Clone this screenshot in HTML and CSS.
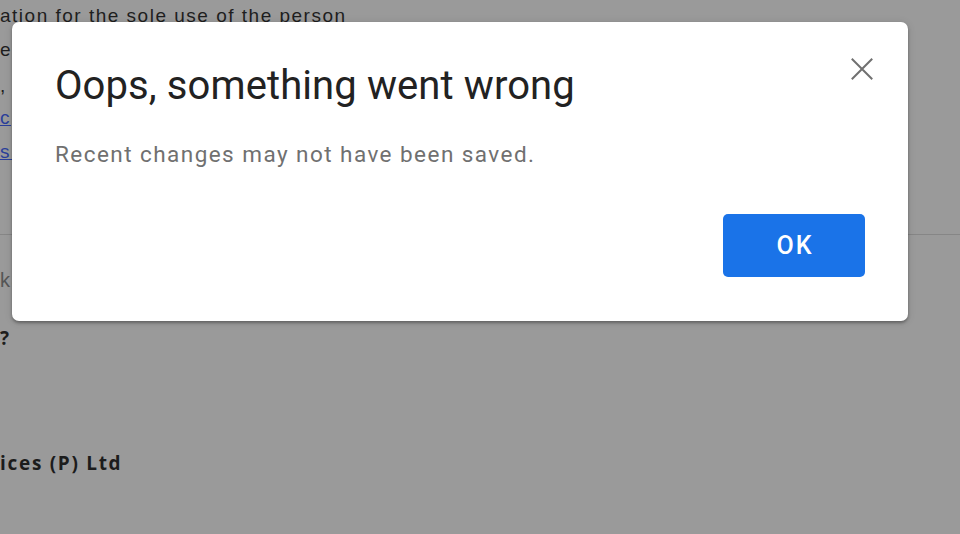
FILE: index.html
```html
<!DOCTYPE html>
<html lang="en">
<head>
<meta charset="utf-8">
<title>Oops, something went wrong</title>
<link rel="stylesheet" href="styles.css">
</head>
<body>
<div class="page">
  <p class="line line-top">ation for the sole use of the person</p>
  <p class="line line-es">es</p>
  <p class="line line-comma">,</p>
  <p class="line line-link"><a href="#">c</a></p>
  <p class="line line-link2"><a href="#">s.</a></p>
  <hr class="rule">
  <p class="line line-ka">ka</p>
  <p class="line line-q">?</p>
  <p class="line line-ltd">ices (P) Ltd</p>
</div>

<div class="dialog" role="dialog">
  <button class="close" aria-label="Close">
    <svg width="22" height="22" viewBox="0 0 22 22"><path d="M1.5 1.5 L20.5 20.5 M20.5 1.5 L1.5 20.5" stroke="#707070" stroke-width="2" fill="none" stroke-linecap="square"/></svg>
  </button>
  <h1 class="title">Oops, something went wrong</h1>
  <p class="msg">Recent changes may not have been saved.</p>
  <div class="actions">
    <button class="ok">OK</button>
  </div>
</div>
</body>
</html>
```
FILE: styles.css
```css
html, body {
  margin: 0;
  padding: 0;
}
body {
  width: 960px;
  height: 534px;
  overflow: hidden;
  background: #9a9a9a;
  position: relative;
  font-family: "Liberation Sans", Arial, sans-serif;
}
.page {
  display: flex;
  flex-direction: column;
  color: #1e1e1e;
  font-size: 19px;
  letter-spacing: 1.5px;
}
.line {
  margin: 0;
  white-space: nowrap;
  line-height: 24px;
}
.line-top { margin-top: 4px; }
.line-es { margin-top: 10px; }
.line-comma { margin-top: 12px; }
.line-link { margin-top: 8px; }
.line-link2 { margin-top: 10px; }
.line a { color: #2a3f9a; text-decoration: underline; }
.rule {
  margin: 70px 0 0;
  border: 0;
  border-top: 1px solid #868686;
  height: 0;
}
.line-ka { margin-top: 33px; color: #555; font-size: 20px; }
.line-q { margin-top: 34px; font-family: "Open Sans", sans-serif; font-weight: 700; }
.line-ltd {
  margin-top: 101px;
  font-family: "Open Sans", sans-serif;
  font-weight: 700;
  font-size: 19px;
  letter-spacing: 1.7px;
  color: #1c1c1c;
}

.dialog {
  position: absolute;
  left: 12px;
  top: 22px;
  width: 896px;
  height: 299px;
  box-sizing: border-box;
  background: #fff;
  border-radius: 7px;
  box-shadow: 0 2px 3px rgba(0,0,0,0.3), 0 1px 8px rgba(0,0,0,0.12);
  padding: 40px 43px 44px 43px;
  display: flex;
  flex-direction: column;
}
.close {
  position: absolute;
  top: 36px;
  right: 35px;
  width: 22px;
  height: 22px;
  padding: 0;
  border: 0;
  background: none;
  display: block;
}
.close svg { display: block; }
.title {
  margin: 0;
  font-family: Roboto, sans-serif;
  font-weight: 400;
  font-size: 40px;
  line-height: 48px;
  color: #222;
  letter-spacing: 0.1px;
}
.msg {
  margin: 30px 0 0;
  font-family: Roboto, sans-serif;
  font-size: 22.5px;
  line-height: 28px;
  color: #707070;
  letter-spacing: 1.45px;
}
.actions {
  margin-top: auto;
  display: flex;
  justify-content: flex-end;
}
.ok {
  width: 142px;
  height: 63px;
  border: 0;
  border-radius: 5px;
  background: #1a73e8;
  color: #fff;
  font-family: Roboto, sans-serif;
  font-weight: 500;
  font-size: 25px;
  letter-spacing: 2px;
  text-indent: 2px;
  padding: 0;
}
```
